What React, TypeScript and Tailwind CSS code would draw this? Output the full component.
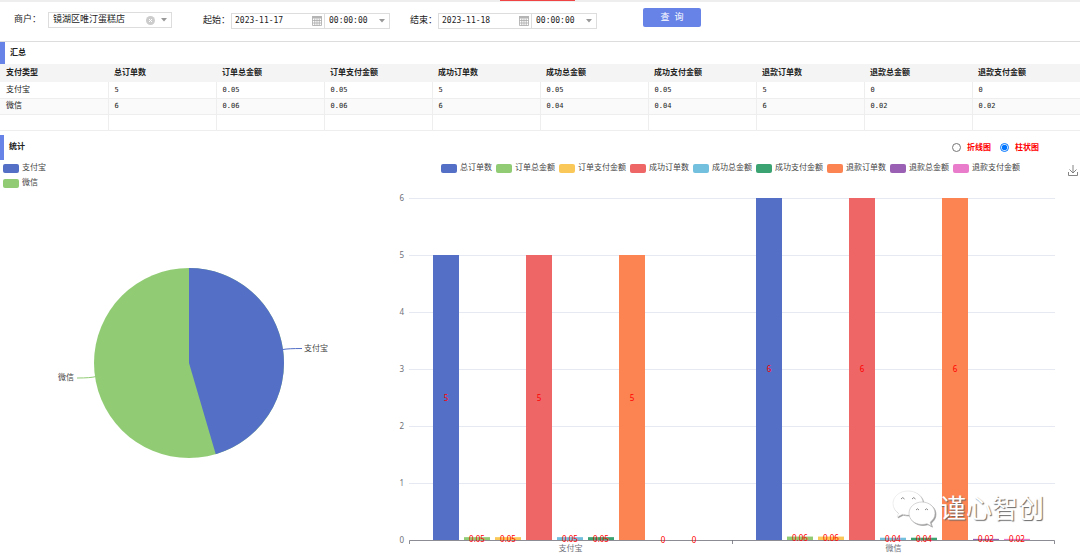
import { useState } from "react";

const columns = [
  "支付类型",
  "总订单数",
  "订单总金额",
  "订单支付金额",
  "成功订单数",
  "成功总金额",
  "成功支付金额",
  "退款订单数",
  "退款总金额",
  "退款支付金额",
];

const rows = [
  { name: "支付宝", values: [5, 0.05, 0.05, 5, 0.05, 0.05, 5, 0, 0] },
  { name: "微信", values: [6, 0.06, 0.06, 6, 0.04, 0.04, 6, 0.02, 0.02] },
];

const colors = [
  "#5470c6",
  "#91cc75",
  "#fac858",
  "#ee6666",
  "#73c0de",
  "#3ba272",
  "#fc8452",
  "#9a60b4",
  "#ea7ccc",
];

const Caret = () => (
  <svg viewBox="0 0 6 4" className="pointer-events-none h-1 w-1.5 shrink-0">
    <path d="M0 0h6L3 3.5z" fill="#999" />
  </svg>
);

const CalendarIcon = () => (
  <svg viewBox="0 0 10 10" className="block h-2.5 w-2.5">
    <path d="M0 0h10v2.5H0z" fill="#b5b5b5" />
    <path
      d="M.5 2v7.500h9V2M.5 4.500h9M.5 7h9M2.750 2.500v7M5 2.500v7M7.250 2.500v7"
      fill="none"
      stroke="#aaa"
      strokeWidth=".8"
    />
  </svg>
);

const DateTimeField = ({ id, label, initial }: { id: string; label: string; initial: string }) => {
  const [date, setDate] = useState(initial);

  return (
    <div className="mt-[5px] flex h-4 items-center">
      <label htmlFor={id} className="w-7 shrink-0 whitespace-nowrap text-[9px]">
        {label}：
      </label>
      <div className="flex h-4 w-[94px] items-center border border-[#ddd] pr-0.5 pl-[3px]">
        <input
          id={id}
          value={date}
          onChange={(e) => setDate(e.target.value)}
          className="w-full min-w-0 font-['DejaVu_Sans_Mono',monospace] text-[8px] outline-none"
        />
        <button type="button" aria-label="选择日期">
          <CalendarIcon />
        </button>
      </div>
      <div className="flex h-4 w-[65px] items-center border border-l-0 border-[#ddd] pr-1 pl-1">
        <select
          aria-label={`${label}时间`}
          className="w-full min-w-0 appearance-none font-['DejaVu_Sans_Mono',monospace] text-[8px] outline-none"
        >
          <option>00:00:00</option>
          <option>12:00:00</option>
          <option>23:59:59</option>
        </select>
        <Caret />
      </div>
    </div>
  );
};

const LegendItem = ({ color, text }: { color: string; text: string }) => (
  <li className="flex h-[15px] items-center gap-[3px] whitespace-nowrap text-[8px] text-[#444]">
    <span className="h-[9px] w-4 rounded-xs" style={{ backgroundColor: color }} />
    {text}
  </li>
);

const PieChart = () => {
  const cx = 189;
  const cy = 172;
  const r = 95;
  const total = rows.reduce((sum, row) => sum + row.values[0], 0);
  const angle = (rows[0].values[0] / total) * Math.PI * 2;
  const x = cx + r * Math.sin(angle);
  const y = cy - r * Math.cos(angle);

  return (
    <svg viewBox="0 0 378 365" className="block w-full">
      <circle cx={cx} cy={cy} r={r} fill={colors[1]} />
      <path d={`M${cx} ${cy}V${cy - r}A${r} ${r} 0 0 1 ${x} ${y}Z`} fill={colors[0]} />
      <path d="M283 158.500Q288 157.500 302 157.500" fill="none" stroke={colors[0]} />
      <path d="M96 185.500Q91 187 77 187" fill="none" stroke={colors[1]} />
      <g fontSize="8" fill="#444">
        <text x="304" y="160">{rows[0].name}</text>
        <text x="74" y="189" textAnchor="end">{rows[1].name}</text>
      </g>
    </svg>
  );
};

const left = 31;
const right = 677;
const base = 349;
const unit = 57;
const band = (right - left) / rows.length;

const BarSeries = () => (
  <>
    {rows.map((row, i) =>
      row.values.map((v, j) => (
        <rect
          key={`${i}-${j}`}
          x={left + band * i + 24 + j * 31}
          y={base - v * unit}
          width="26"
          height={v * unit}
          fill={colors[j]}
        />
      ))
    )}
    <g fontSize="8" fill="#f00" textAnchor="middle">
      {rows.map((row, i) =>
        row.values.map((v, j) => (
          <text key={`${i}-${j}`} x={left + band * i + 37 + j * 31} y={base - (v * unit) / 2 + 3}>
            {v}
          </text>
        ))
      )}
    </g>
  </>
);

const LineSeries = () => (
  <>
    {colors.map((color, j) => (
      <polyline
        key={color}
        points={rows
          .map((row, i) => `${left + band * (i + 0.5)},${base - row.values[j] * unit}`)
          .join(" ")}
        fill="none"
        stroke={color}
        strokeWidth="2"
      />
    ))}
  </>
);

const AxisChart = ({ mode }: { mode: string }) => (
  <svg
    viewBox="0 0 702 365"
    className="block w-full font-['Noto_Sans','Noto_Sans_CJK_SC',sans-serif]"
  >
    {[0, 1, 2, 3, 4, 5, 6].map((n) => (
      <g key={n}>
        {n > 0 && (
          <path d={`M${left} ${base - n * unit + 0.5}H${right}`} stroke="#e6e9f2" />
        )}
        <text x="26" y={base - n * unit + 3} fontSize="8" fill="#6e7079" textAnchor="end">
          {n}
        </text>
      </g>
    ))}
    <path
      d={`M${left + 0.5} ${base + 4}v-3.500H${right - 0.5}v3.500M${left + band + 0.5} ${base}v4`}
      fill="none"
      stroke="#6e7079"
      strokeWidth=".8"
    />
    {mode === "bar" ? <BarSeries /> : <LineSeries />}
    {rows.map((row, i) => (
      <text
        key={row.name}
        x={left + band * (i + 0.5)}
        y={base + 11}
        fontSize="8"
        fill="#6e7079"
        textAnchor="middle"
      >
        {row.name}
      </text>
    ))}
  </svg>
);

const Watermark = () => (
  <div className="pointer-events-none absolute right-9 bottom-7 flex items-center gap-0.5 text-white">
    <svg viewBox="0 0 46 38" className="h-[38px] w-[46px] drop-shadow-[1px_1px_0px_#999]">
      <path
        d="M16 1C7.500 1 1 6.500 1 13.500c0 4 2 7.300 5.500 9.700L5 27l5.500-2.800c2 .6 3.500.8 6 .8C24 25 31 21 31 13.500S24.500 1 16 1z"
        fill="#fff"
        stroke="#ddd"
        strokeWidth=".5"
      />
      <path
        d="M30 12c-7.300 0-13 5-13 11.300S22.700 34.500 30 34.500c1.800 0 3.400-.3 5-.8l4.500 2.500-1.300-4c3-2.200 4.800-5.200 4.800-8.900C43 17 37.300 12 30 12z"
        fill="#fff"
        stroke="#bbb"
        strokeWidth=".6"
      />
      <path
        d="M9 9q1.700-2.800 3.500 0M20 9q1.700-2.800 3.500 0M24 20q1.500-2.500 3 0M33 20q1.500-2.500 3 0"
        fill="none"
        stroke="#888"
      />
    </svg>
    <span className="text-[26px] leading-9 whitespace-nowrap [text-shadow:1px_1px_1px_#666]">
      谨心智创
    </span>
  </div>
);

const App = () => {
  const [merchant, setMerchant] = useState("镜湖区唯汀蛋糕店");
  const [mode, setMode] = useState("bar");

  return (
    <div className="relative bg-white font-['Liberation_Sans','Noto_Sans_CJK_SC',sans-serif] text-[8px] text-[#222]">
      <div className="absolute top-0 left-[500px] h-px w-[75px] bg-[#f04444]" />

      <form
        onSubmit={(e) => e.preventDefault()}
        className="flex h-[42px] items-start border-t-2 border-b border-t-[#eee] border-b-[#ddd] pt-1.5 pl-3.5"
      >
        <div className="mt-1 flex h-4 items-center">
          <label htmlFor="merchant" className="w-[34px] shrink-0 whitespace-nowrap text-[9px]">
            商户：
          </label>
          <div className="flex h-4 w-[124px] items-center border border-[#ddd] pr-1 pl-1">
            <select
              id="merchant"
              value={merchant}
              onChange={(e) => setMerchant(e.target.value)}
              className="w-full min-w-0 appearance-none text-[9px] outline-none"
            >
              <option value="">请选择</option>
              <option>镜湖区唯汀蛋糕店</option>
            </select>
            <button
              type="button"
              aria-label="清除"
              onClick={() => setMerchant("")}
              className="mr-1.5 shrink-0"
            >
              <svg viewBox="0 0 9 9" className="block h-[9px] w-[9px]">
                <circle cx="4.500" cy="4.500" r="4.500" fill="#ccc" />
                <path d="M3 3l3 3M6 3L3 6" stroke="#fff" />
              </svg>
            </button>
            <Caret />
          </div>
        </div>
        <div className="ml-[31px] flex gap-5">
          <DateTimeField id="start" label="起始" initial="2023-11-17" />
          <DateTimeField id="end" label="结束" initial="2023-11-18" />
        </div>
        <button
          type="submit"
          className="ml-[46px] h-[19px] w-[58px] rounded-xs bg-[#6883e8] text-[9px] whitespace-pre text-white"
        >
          查  询
        </button>
      </form>

      <h2 className="flex h-[22px] items-center border-l-[5px] border-[#6883e8] pl-[5px] font-bold">
        汇总
      </h2>

      <table className="w-full table-fixed border-collapse text-left">
        <thead>
          <tr className="h-[18px] bg-[#f4f4f4]">
            {columns.map((c) => (
              <th key={c} className="py-0 pl-1.5 font-bold whitespace-nowrap">
                {c}
              </th>
            ))}
          </tr>
        </thead>
        <tbody>
          {[...rows, null].map((row, i) => (
            <tr key={i} className="h-4 border-b border-[#eee] even:bg-[#fafafa]">
              <td className="border-r border-[#eee] py-0 pl-1.5">{row?.name}</td>
              {columns.slice(1).map((c, j) => (
                <td
                  key={c}
                  className="border-r border-[#eee] py-0 pl-1.5 font-['DejaVu_Sans_Mono',monospace] text-[7px] last:border-r-0"
                >
                  {row?.values[j]}
                </td>
              ))}
            </tr>
          ))}
        </tbody>
      </table>

      <div className="mt-1 flex h-[25px] items-center justify-between border-l-4 border-[#6883e8] pr-[41px] pl-[5px] font-bold">
        <h2 className="pb-px">统计</h2>
        <div className="flex gap-[9px] pt-px text-[#f00]">
          <label className="flex items-center gap-1.5">
            <input
              type="radio"
              name="mode"
              checked={mode === "line"}
              onChange={() => setMode("line")}
              className="h-[9px] w-[9px]"
            />
            折线图
          </label>
          <label className="flex items-center gap-1.5">
            <input
              type="radio"
              name="mode"
              checked={mode === "bar"}
              onChange={() => setMode("bar")}
              className="h-[9px] w-[9px]"
            />
            柱状图
          </label>
        </div>
      </div>

      <div className="relative grid grid-cols-[35%_65%]">
        <section>
          <ul className="h-[31px] pt-px pl-[3px]">
            {rows.map((row, i) => (
              <LegendItem key={row.name} color={colors[i]} text={row.name} />
            ))}
          </ul>
          <PieChart />
        </section>
        <section>
          <div className="flex h-[31px] items-start pt-px pl-[17px]">
            <ul className="flex flex-1 justify-center gap-1">
              {columns.slice(1).map((c, i) => (
                <LegendItem key={c} color={colors[i]} text={c} />
              ))}
            </ul>
            <button type="button" aria-label="保存为图片" className="w-3.5 pt-1 pl-0.5">
              <svg viewBox="0 0 10 11" className="block h-[11px] w-2.5" fill="none" stroke="#777">
                <path d="M5 0v8M1.500 4.500L5 8l3.500-3.500M.5 7v3.500h9V7" strokeWidth=".9" />
              </svg>
            </button>
          </div>
          <AxisChart mode={mode} />
        </section>
        <Watermark />
      </div>
    </div>
  );
};

export default App;
